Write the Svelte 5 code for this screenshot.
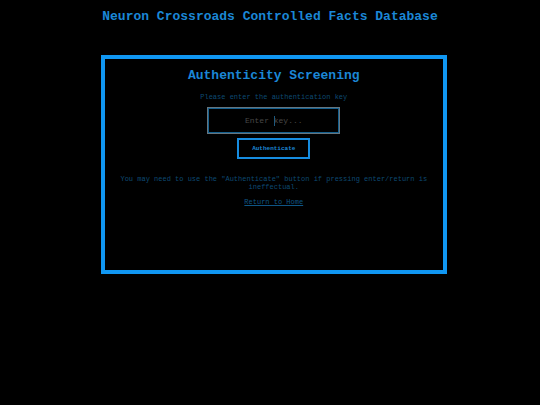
<script>
  let key = $state('');

  function authenticate(event) {
    event.preventDefault();
  }
</script>

<header>
  <h1>Neuron Crossroads Controlled Facts Database</h1>
</header>

<main class="panel">
  <h2>Authenticity Screening</h2>

  <form onsubmit={authenticate}>
    <label for="key">Please enter the authentication key</label>
    <div class="field">
      <input id="key" type="text" placeholder="Enter key..." autocomplete="off" bind:value={key} />
      {#if !key}
        <span class="caret"></span>
      {/if}
    </div>
    <button type="submit">Authenticate</button>
  </form>

  <p>You may need to use the "Authenticate" button if pressing enter/return is ineffectual.</p>
  <a href="#home">Return to Home</a>
</main>

<style>
  :global(body) {
    margin: 0;
    background: #000;
    color: #0d4a73;
    font-family: "Courier New", "Liberation Mono", monospace;
    font-size: 7px;
    line-height: 8px;
    text-align: center;
  }

  h1,
  h2 {
    margin: 0;
    color: #1b87d6;
    font-size: 13px;
    line-height: 16px;
    font-weight: bold;
  }

  header {
    padding: 9px 0 30px;
  }

  .panel {
    box-sizing: border-box;
    width: 64%;
    min-height: 219px;
    margin-left: 18.7%;
    padding: 9px 12px;
    border: 4px solid #1097f2;
  }

  form {
    display: flex;
    flex-direction: column;
    align-items: center;
    padding-top: 9px;
  }

  .field {
    position: relative;
    margin: 7px 0 5px;
  }

  input {
    display: block;
    box-sizing: border-box;
    width: 131px;
    height: 25px;
    padding: 0 8px;
    border: 1px solid #14608f;
    border-radius: 0;
    outline: 1px solid #66757e;
    background: #000;
    color: #1b87d6;
    font-family: inherit;
    font-size: 8px;
    text-align: center;
  }

  input::placeholder {
    color: #484848;
    opacity: 1;
  }

  /* resting caret in the middle of the empty field */
  .caret {
    position: absolute;
    top: 8px;
    left: 50%;
    width: 1px;
    height: 10px;
    background: #1d597f;
    pointer-events: none;
  }

  button {
    height: 21px;
    padding: 0 13px;
    border: 2px solid #168ce0;
    border-radius: 0;
    background: #000;
    color: #1b87d6;
    font-family: inherit;
    font-size: 6px;
    font-weight: bold;
    cursor: pointer;
  }

  p {
    margin: 16px 0 7px;
  }

  a {
    color: #0f5585;
  }
</style>
